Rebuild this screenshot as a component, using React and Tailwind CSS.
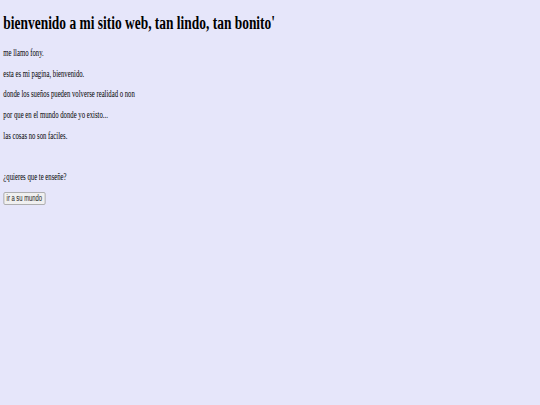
export default function App() {
  return (
    <div className="min-h-[405px] w-[540px] overflow-hidden bg-[#e6e6fa]">
      {/* page drawn at 0.6 of its size, squeezed a bit more across */}
      <div className="w-[771px] origin-top-left scale-x-[0.7] p-[4.8px] font-['Liberation_Serif',serif] text-black">
        <h1 className="mt-[7.4px] mb-[12.9px] text-[19.2px] font-bold leading-[1.15]">
          bienvenido a mi sitio web, tan lindo, tan bonito'
        </h1>
        <p className="my-[9.6px] text-[9.6px] leading-[1.15]">me llamo fony.</p>
        <p className="my-[9.6px] text-[9.6px] leading-[1.15]">esta es mi pagina, bienvenido.</p>
        <p className="my-[9.6px] text-[9.6px] leading-[1.15]">donde los sueños pueden volverse realidad o non</p>
        <p className="my-[9.6px] text-[9.6px] leading-[1.15]">por que en el mundo donde yo existo...</p>
        <p className="my-[9.6px] text-[9.6px] leading-[1.15]">las cosas no son faciles.</p>
        <p className="my-[9.6px] text-[9.6px] leading-[1.15]">&nbsp;</p>
        <p className="my-[9.6px] text-[9.6px] leading-[1.15]">¿quieres que te enseñe?</p>
        <button className="block rounded-[2px] border border-[#a3a3a3] bg-[#f0f0f0] px-[3.6px] py-[1px] font-['Liberation_Sans',sans-serif] text-[8.4px] leading-[1.15] text-[#222]">
          ir a su mundo
        </button>
      </div>
    </div>
  );
}
